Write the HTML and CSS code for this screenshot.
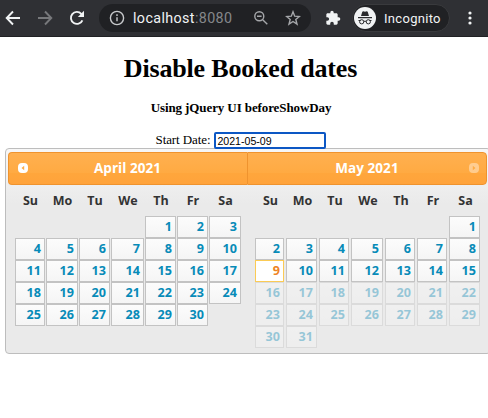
FILE: index.html
```html
<!DOCTYPE html>
<html lang="en">
<head>
<meta charset="utf-8">
<title>Disable Booked dates</title>
<link rel="stylesheet" href="styles.css">
</head>
<body>
<header class="toolbar">
  <svg class="nav back" viewBox="0 0 16 16"><path d="M15 8H2M8 1.5 1.7 8 8 14.5"/></svg>
  <svg class="nav forward" viewBox="0 0 16 16"><path d="M1 8h13M8 1.5 14.3 8 8 14.5"/></svg>
  <svg class="nav reload" viewBox="0 0 16 16"><path d="M13.4 10.3A6 6 0 1 1 12.3 3.8L14 5.5"/><path class="solid" d="M15 .8V7H8.8z"/></svg>
  <div class="omnibox">
    <svg class="info" viewBox="0 0 16 16"><circle cx="8" cy="8" r="6.6"/><path d="M8 7.2v4M8 4.2v1.7"/></svg>
    <span class="url">localhost<span class="port">:8080</span></span>
    <svg class="lens" viewBox="0 0 16 16"><circle cx="6.3" cy="6.3" r="4.5"/><path d="m9.7 9.7 4.6 4.6M4 6.3h4.6"/></svg>
    <svg class="star" viewBox="0 0 16 16"><path d="m8 1.800 1.700 4.400 4.700.3-3.600 3 1.200 4.600L8 11.500l-4 2.600 1.200-4.600-3.600-3 4.700-.3z"/></svg>
  </div>
  <svg class="puzzle" viewBox="0 0 24 24"><path d="M20.5 11H19V7c0-1.1-.9-2-2-2h-4V3.500a2.500 2.500 0 0 0-5 0V5H4c-1.100 0-2 .9-2 2v3.800h1.500a2.700 2.700 0 0 1 0 5.400H2V20c0 1.100.9 2 2 2h3.800v-1.500a2.700 2.700 0 0 1 5.400 0V22H17c1.100 0 2-.9 2-2v-4h1.500a2.500 2.500 0 0 0 0-5z"/></svg>
  <div class="incognito">
    <svg viewBox="0 0 22 22"><circle cx="11" cy="11" r="11" fill="#f1f3f4"/><path fill="#292a2d" d="M7 9 8.300 4.700l1-.4L11 4.800l1.700-.5 1 .4L15 9zM4 10h14v1.200H4z"/><g fill="none" stroke="#292a2d"><circle cx="7.700" cy="14.800" r="2.100"/><circle cx="14.300" cy="14.800" r="2.100"/><path d="M9.800 14.500q1.200-.8 2.400 0M4.500 13.500h2M15.500 13.500h2"/></g></svg>
    <span>Incognito</span>
  </div>
  <svg class="more" viewBox="0 0 4 14"><circle cx="2" cy="2" r="1.600"/><circle cx="2" cy="7" r="1.600"/><circle cx="2" cy="12" r="1.600"/></svg>
</header>
<main class="page">
  <h1>Disable Booked dates</h1>
  <h4>Using jQuery UI beforeShowDay</h4>
  <div class="field"><label for="start">Start Date:</label><input id="start" type="text" value="2021-05-09"></div>
</main>
<section class="picker">
  <div class="month april">
    <div class="title"><svg class="arrow" viewBox="0 0 10 10"><path fill-rule="evenodd" d="M4 0h2a4 4 0 0 1 4 4v2a4 4 0 0 1-4 4H4a4 4 0 0 1-4-4V4a4 4 0 0 1 4-4zM6.200 2.800 3.500 5l2.700 2.200z"/></svg><span>April 2021</span></div>
    <div class="week"><b>Su</b><b>Mo</b><b>Tu</b><b>We</b><b>Th</b><b>Fr</b><b>Sa</b></div>
    <div class="days">
      <a class="thu">1</a><a>2</a><a>3</a>
      <a>4</a><a>5</a><a>6</a><a>7</a><a>8</a><a>9</a><a>10</a>
      <a>11</a><a>12</a><a>13</a><a>14</a><a>15</a><a>16</a><a>17</a>
      <a>18</a><a>19</a><a>20</a><a>21</a><a>22</a><a>23</a><a>24</a>
      <a>25</a><a>26</a><a>27</a><a>28</a><a>29</a><a>30</a>
    </div>
  </div>
  <div class="month may">
    <div class="title"><span>May 2021</span><svg class="arrow" viewBox="0 0 10 10"><path fill-rule="evenodd" d="M4 0h2a4 4 0 0 1 4 4v2a4 4 0 0 1-4 4H4a4 4 0 0 1-4-4V4a4 4 0 0 1 4-4zM3.800 2.800 6.500 5 3.800 7.200z"/></svg></div>
    <div class="week"><b>Su</b><b>Mo</b><b>Tu</b><b>We</b><b>Th</b><b>Fr</b><b>Sa</b></div>
    <div class="days">
      <a class="sat">1</a>
      <a>2</a><a>3</a><a>4</a><a>5</a><a>6</a><a>7</a><a>8</a>
      <a class="selected">9</a><a>10</a><a>11</a><a>12</a><a>13</a><a>14</a><a>15</a>
      <a class="booked">16</a><a class="booked">17</a><a class="booked">18</a><a class="booked">19</a><a class="booked">20</a><a class="booked">21</a><a class="booked">22</a>
      <a class="booked">23</a><a class="booked">24</a><a class="booked">25</a><a class="booked">26</a><a class="booked">27</a><a class="booked">28</a><a class="booked">29</a>
      <a class="booked">30</a><a class="booked">31</a>
    </div>
  </div>
</section>
</body>
</html>
```
FILE: styles.css
```css
* { box-sizing: border-box; }
html { overflow: hidden; }
body { margin: 0; width: 488px; height: 418px; overflow: hidden; background: #fff; color: #000; font-family: "Liberation Serif", serif; }

.toolbar { display: flex; align-items: center; height: 37px; padding: 0 0 1px 5px; background: #2f3034; border-bottom: 1px solid #202124; font-family: Roboto, sans-serif; }
.toolbar svg { display: block; flex: none; }
.nav { width: 16px; height: 16px; fill: none; stroke: #f1f3f4; stroke-width: 1.9; }
.forward { margin-left: 16px; stroke: #77787b; }
.reload { margin-left: 16px; }
.solid { fill: #f1f3f4; stroke: none; }
.omnibox { display: flex; align-items: center; width: 212px; height: 28px; margin-left: 14px; padding-left: 10px; border-radius: 14px; background: #202124; }
.omnibox svg { width: 16px; height: 16px; fill: none; stroke: #c8cacc; stroke-width: 1.4; }
.url { width: 120px; margin-left: 8px; color: #f1f3f4; font-size: 14.3px; letter-spacing: .38px; white-space: nowrap; }
.port { color: #85878a; }
.omnibox .lens, .omnibox .star { stroke: #a5a7aa; }
.star { margin-left: 16px; }
.puzzle { width: 16px; height: 16px; margin-left: 14px; fill: #f1f3f4; }
.incognito { display: flex; align-items: center; width: 98px; height: 28px; margin-left: 11px; padding-left: 1px; border: 1px solid #393a3d; border-radius: 14px; background: #202124; color: #f1f3f4; font-size: 13px; letter-spacing: .3px; }
.incognito span { margin-top: 1px; }
.incognito svg { width: 22px; height: 22px; margin-right: 8px; }
.more { width: 4px; height: 14px; margin-left: 18px; fill: #f1f3f4; }

.page { height: 111px; padding-top: 16px; text-align: center; }
h1 { margin: 0; padding-right: 7px; font-size: 26px; line-height: 31px; letter-spacing: -.18px; }
h4 { margin: 15px 0 0; padding-right: 6px; font-size: 13px; line-height: 18px; letter-spacing: -.1px; }
.field { display: flex; justify-content: center; align-items: center; margin-top: 15px; padding-right: 6px; font-size: 13px; line-height: 16px; }
.field label { margin-top: -1px; letter-spacing: -.1px; }
.field input { width: 112px; height: 17px; margin-left: 4px; padding: 1px 1px 0; border: 2px solid #0c57c4; border-radius: 2px; outline: none; font: 10.6px "Liberation Sans", sans-serif; }

.picker { display: grid; grid-template-columns: 239px 240px; width: 486px; height: 206px; margin-left: 5px; padding: 3px 2px; border: 1px solid #bdbdbd; border-radius: 4px; background: linear-gradient(#f7f7f7, #eaeaea 55px); font-family: "Open Sans", sans-serif; font-weight: 700; }
.title { display: flex; align-items: center; justify-content: center; height: 33px; padding-bottom: 1px; border: 1px solid #ef932e; background: linear-gradient(#ffb050, #ffaa42 65%, #ffa63c 66%, #ffa33b); color: #fff; font-size: 13.5px; letter-spacing: .05px; }
.april .title { border-right: 0; border-radius: 4px 0 0 4px; }
.may .title { border-radius: 0 4px 4px 0; }
.arrow { width: 10px; height: 10px; fill: #fff; }
.april .arrow { margin: 0 66px 0 -77px; }
.may .arrow { margin: 0 -80px 0 70px; opacity: .4; }
.week, .days { display: grid; grid-template-columns: 31px 33px 32px 34px 32px 32px 33px; padding-left: 7px; }
.may .week, .may .days { padding-left: 8px; }
.week { height: 31px; align-items: center; color: #333; font-size: 12.5px; text-align: center; }
.week b { font-weight: 700; }
.days { grid-auto-rows: 22px; }
.days a { margin-right: 1px; padding-right: 3px; border: 1px solid #c3c3c3; background: linear-gradient(#fcfcfc, #f5f5f5); color: #078bb8; font-size: 12.6px; line-height: 20px; text-align: right; }
.may .days a { margin-right: 2px; padding-right: 3px; }
.thu { grid-column: 5; }
.sat { grid-column: 7; }
.days .booked { opacity: .37; }
.days .selected { border-color: #fbcb55; background: #fff; color: #ee8424; }
```
